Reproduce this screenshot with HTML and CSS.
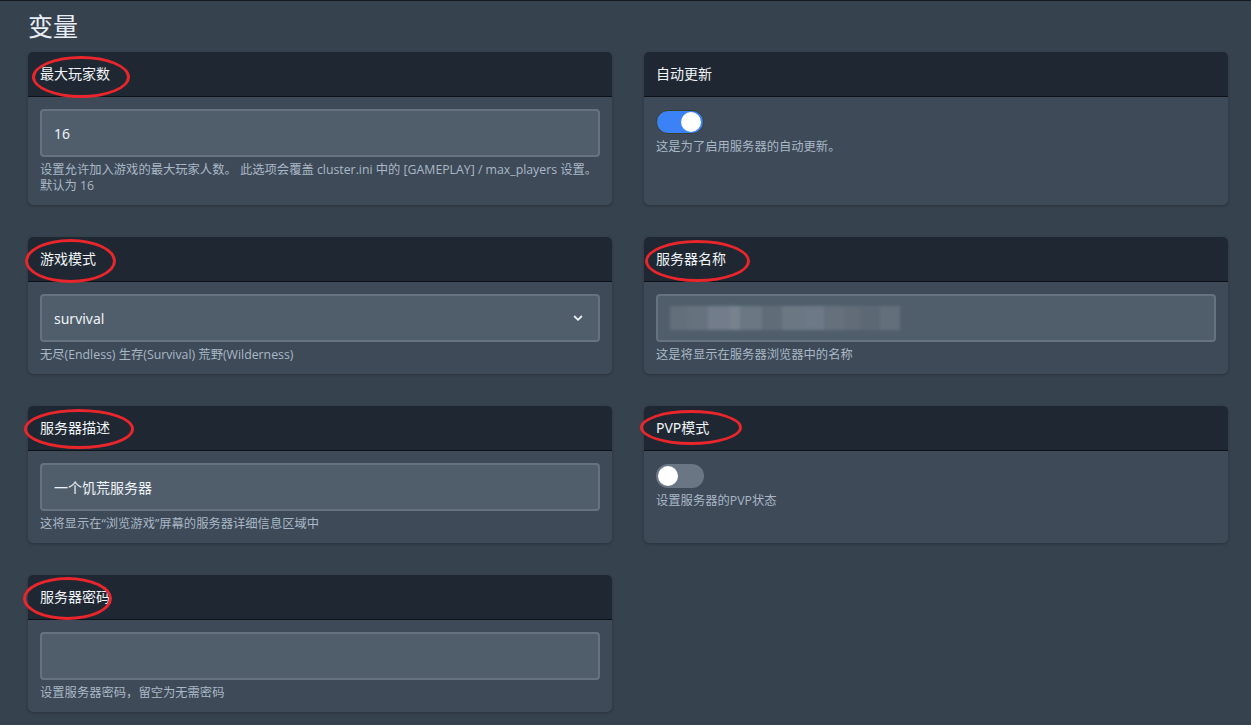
FILE: index.html
```html
<!DOCTYPE html>
<html lang="zh-CN">

<head>
   <meta charset="UTF-8">
   <meta name="viewport" content="width=device-width, initial-scale=1.0">
   <title>变量</title>
   <link rel="stylesheet" href="styles.css">
</head>

<body>
   <div class="page">
      <h1 class="page-title">变量</h1>

      <div class="var-grid">
         <div class="card">
            <div class="card-header">最大玩家数<span class="mark mark-1"></span></div>
            <div class="card-body">
               <div class="input">16</div>
               <p class="help">设置允许加入游戏的最大玩家人数。 此选项会覆盖 cluster.ini 中的 [GAMEPLAY] / max_players 设置。默认为 16</p>
            </div>
         </div>

         <div class="card">
            <div class="card-header">自动更新</div>
            <div class="card-body">
               <div class="toggle on"><span class="knob"></span></div>
               <p class="help">这是为了启用服务器的自动更新。</p>
            </div>
         </div>

         <div class="card">
            <div class="card-header">游戏模式<span class="mark mark-2"></span></div>
            <div class="card-body">
               <div class="input select">
                  <span>survival</span>
                  <svg width="12" height="12" viewBox="0 0 16 16" fill="none" stroke="#e6edf3" stroke-width="2.4" stroke-linecap="round" stroke-linejoin="round">
                     <path d="M3.5 6l4.5 4.5 4.5-4.5"/>
                  </svg>
               </div>
               <p class="help">无尽(Endless) 生存(Survival) 荒野(Wilderness)</p>
            </div>
         </div>

         <div class="card">
            <div class="card-header">服务器名称<span class="mark mark-5"></span></div>
            <div class="card-body">
               <div class="input">
                  <div class="blurred">
                     <span style="background:#66717d;width:18px"></span>
                     <span style="background:#6a7582;width:20px"></span>
                     <span style="background:#76808e;width:22px"></span>
                     <span style="background:#7d8793;width:10px"></span>
                     <span style="background:#6e7a86;width:22px"></span>
                     <span style="background:#636e7b;width:20px"></span>
                     <span style="background:#6f7b87;width:24px"></span>
                     <span style="background:#717c89;width:18px"></span>
                     <span style="background:#69737f;width:20px"></span>
                     <span style="background:#646e7b;width:16px"></span>
                     <span style="background:#5f6a77;width:20px"></span>
                     <span style="background:#66717d;width:20px"></span>
                  </div>
               </div>
               <p class="help">这是将显示在服务器浏览器中的名称</p>
            </div>
         </div>

         <div class="card">
            <div class="card-header">服务器描述<span class="mark mark-3"></span></div>
            <div class="card-body">
               <div class="input">一个饥荒服务器</div>
               <p class="help">这将显示在“浏览游戏”屏幕的服务器详细信息区域中</p>
            </div>
         </div>

         <div class="card">
            <div class="card-header">PVP模式<span class="mark mark-6"></span></div>
            <div class="card-body">
               <div class="toggle"><span class="knob"></span></div>
               <p class="help">设置服务器的PVP状态</p>
            </div>
         </div>

         <div class="card">
            <div class="card-header">服务器密码<span class="mark mark-4"></span></div>
            <div class="card-body">
               <div class="input"></div>
               <p class="help">设置服务器密码，留空为无需密码</p>
            </div>
         </div>
      </div>
   </div>
</body>

</html>
```

FILE: styles.css
```css
body {
   margin: 0;
   background-color: #37424f;
   color: #e6edf3;
   font-family: "Noto Sans", "Noto Sans CJK SC", sans-serif;
}

.page {
   border-top: 1px solid #161b21;
   padding: 10px 23px 13px 28px;
}

.page-title {
   margin: 0 0 10px 0;
   font-size: 25px;
   font-weight: normal;
   line-height: 31px;
   color: #e8eef4;
}

.var-grid {
   display: grid;
   grid-template-columns: 1fr 1fr;
   column-gap: 32px;
   row-gap: 32px;
}

.card {
   background-color: #3e4a58;
   border-radius: 5px;
   box-shadow: 0 1px 3px rgba(0, 0, 0, 0.25);
}

.card-header {
   position: relative;
   height: 44px;
   line-height: 44px;
   padding: 0 12px;
   font-size: 14px;
   background-color: #1f2832;
   border-bottom: 1px solid #0e1115;
   border-radius: 5px 5px 0 0;
   color: #f0f4f8;
}

.card-body {
   padding: 12px 12px 11px 12px;
}

.input {
   box-sizing: border-box;
   height: 48px;
   padding: 0 12px;
   display: flex;
   align-items: center;
   font-size: 14px;
   color: #eef2f6;
   background-color: #505e6c;
   border: 2px solid #66737f;
   border-radius: 4px;
}

.select {
   justify-content: space-between;
   padding-right: 14px;
}

.help {
   margin: 5px 0 0 0;
   font-family: "Open Sans", "Noto Sans CJK SC", sans-serif;
   font-size: 12.3px;
   line-height: 16px;
   color: #a9b8c6;
}

.toggle {
   position: relative;
   box-sizing: border-box;
   width: 48px;
   height: 24px;
   border-radius: 12px;
   background-color: #6b7684;
   margin-top: 1px;
}

.toggle.on {
   background-color: #3b82f6;
   border: 1px solid #3a3f2a;
}

.knob {
   position: absolute;
   top: 2px;
   left: 2px;
   width: 20px;
   height: 20px;
   border-radius: 50%;
   background-color: #ffffff;
}

.toggle.on .knob {
   top: 1px;
   left: auto;
   right: 2px;
}

.blurred {
   display: flex;
   height: 24px;
   filter: blur(1.5px);
   opacity: 0.9;
}

.blurred span {
   display: block;
   height: 100%;
}

/* red annotation rings */
.mark {
   position: absolute;
   border: 3px solid #e8262b;
   border-radius: 50%;
   pointer-events: none;
}

.mark-1 { left: 4px; top: 4px; width: 92px; height: 36px; }
.mark-2 { left: -3px; top: 2px; width: 85px; height: 38px; }
.mark-3 { left: -4px; top: 3px; width: 104px; height: 34px; }
.mark-4 { left: -5px; top: 2px; width: 83px; height: 37px; }
.mark-5 { left: 1px; top: 3px; width: 99px; height: 36px; }
.mark-6 { left: -4px; top: 4px; width: 96px; height: 29px; }
```
